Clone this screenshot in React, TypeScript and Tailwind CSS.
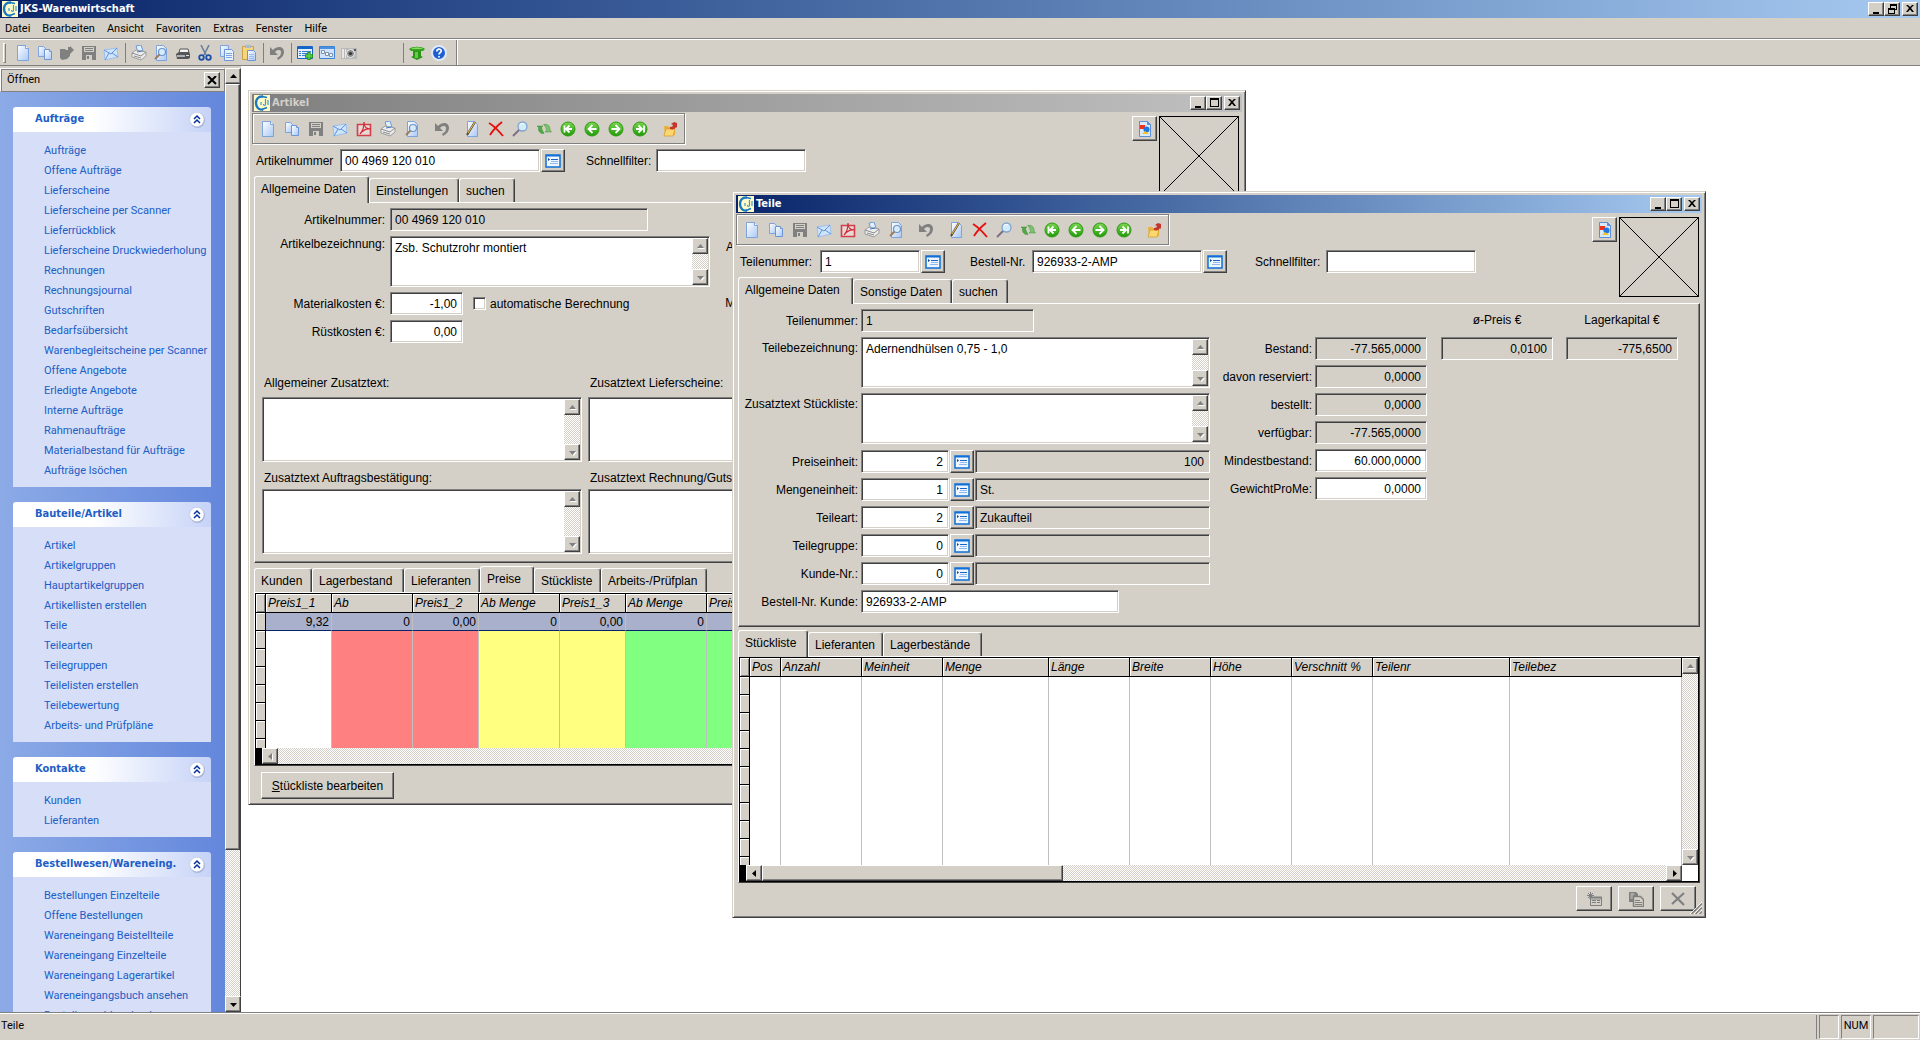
import { useId } from 'react'
import type { ReactNode } from 'react'
import clsx from 'clsx'

const RAISED =
  'border border-t-white border-l-white border-r-[#404040] border-b-[#404040] bg-[#d4d0c8] shadow-[inset_-1px_-1px_0_#808080]'
const SUNKEN =
  'border border-t-[#808080] border-l-[#808080] border-r-white border-b-white shadow-[inset_1px_1px_0_#404040,inset_-1px_-1px_0_#d4d0c8]'
const DITHER =
  'bg-[conic-gradient(#fff_25%,#d4d0c8_0_50%,#fff_0_75%,#d4d0c8_0)] bg-[length:2px_2px]'
const UI_FONT = "font-['Roboto','DejaVu_Sans',sans-serif]"
const UI_BOLD = "font-['DejaVu_Sans_Condensed','DejaVu_Sans',sans-serif] text-[11px] font-bold"

/* ---------- icons ---------- */

const PAGE = 'M3.5 .5h7l3 3v12h-10z'

const icons: Record<string, ReactNode> = {
  new: (
    <>
      <path d="M2.5 .5h8l3 3v12h-11z" fill="url(#paper)" stroke="#7fa3dc" />
      <path d="M10.5 .5v3h3" fill="#fff" stroke="#7fa3dc" />
    </>
  ),
  copy: (
    <>
      <path d="M1.5 1.5h5l2 2v8h-7z" fill="url(#paper)" stroke="#7fa3dc" />
      <path d="M7.5 4.5h5l2 2v8h-7z" fill="url(#paper)" stroke="#6d94d4" />
      <path d="M12.5 4.5v2h2" fill="#fff" stroke="#6d94d4" />
    </>
  ),
  open: (
    <path
      d="M1 4h5l1 1h2V2h2V1l4 4-4 4v2l-3 3-5 1-2-2z"
      fill="#808080"
    />
  ),
  save: (
    <>
      <path d="M1 1h14v14H1z" fill="#808080" />
      <path d="M3 2h10v5H3zM5 10h6v5H5z" fill="#d4d0c8" />
      <path d="M4 3h8v1H4zM4 5h8v1H4zM6 11h2v3H6z" fill="#808080" />
    </>
  ),
  mail: (
    <>
      <path d="M1 5l13-2 1 9-13 3z" fill="#cfe3fa" stroke="#9dc0ee" />
      <path d="M1 5l7 4 6-6M2 15l4-7M15 12l-6-4" fill="none" stroke="#5f95dc" />
    </>
  ),
  pdf: (
    <>
      <path d="M1.5 3.5h13v11h-13z" fill="#e8d8d8" stroke="#d0414a" strokeWidth="1.6" />
      <path d="M4 13c3-3 4-7 4-12 0 5 2 7 7 7-5-1-8 1-11 5z" fill="none" stroke="#d02b33" strokeWidth="1.2" />
    </>
  ),
  print: (
    <>
      <path d="M5 1l5-1 2 6-5 1z" fill="#e4effc" stroke="#6f9bd8" />
      <path d="M1 8l4-3 10 2v4l-5 4-9-3z" fill="#ececec" stroke="#9c9c9c" />
      <path d="M1 8l9 3 5-4M3 11l7 2" fill="none" stroke="#8c8c8c" />
      <path d="M6 7l5-1" stroke="#3f78c8" />
    </>
  ),
  preview: (
    <>
      <path d={PAGE} fill="url(#paper)" stroke="#7fa3dc" />
      <circle cx="9" cy="7" r="3.5" fill="#d6ecfb" stroke="#6d94c8" strokeWidth="1.2" />
      <path d="M6.5 9.5L2 14" stroke="#9a7d5c" strokeWidth="2" />
    </>
  ),
  fax: (
    <>
      <path d="M5 4h8l1 4H4z" fill="#f4f4f4" stroke="#555" />
      <path d="M1 9l3-2h10l1 2v4l-2 1H2z" fill="#555" />
      <path d="M2 10h8v2H2z" fill="#a9b0b8" />
      <path d="M11 10h3v1h-3z" fill="#ddd" />
    </>
  ),
  cut: (
    <>
      <path d="M4 0l5 10M12 0L7 10" stroke="#6b7f9c" strokeWidth="1.6" />
      <circle cx="4.5" cy="12.5" r="2.3" fill="none" stroke="#1d4fa8" strokeWidth="1.8" />
      <circle cx="11.5" cy="12.5" r="2.3" fill="none" stroke="#1d4fa8" strokeWidth="1.8" />
    </>
  ),
  copytext: (
    <>
      <path d="M1.5 .5h8v11h-8z" fill="url(#paper)" stroke="#7fa3dc" />
      <path d="M5.5 4.5h7l2 2v9h-9z" fill="#e8f2ff" stroke="#6d94d4" />
      <path d="M7 8.5h6M7 10.5h6M7 12.5h6" stroke="#7fa3dc" />
    </>
  ),
  paste: (
    <>
      <path d="M1.5 1.5h11v13h-11z" fill="#f5d67a" stroke="#caa045" />
      <path d="M4 0h6v3H4z" fill="#aeb9c8" />
      <path d="M6.5 5.5h6l2 2v8h-8z" fill="url(#paper)" stroke="#6d94d4" />
      <path d="M8 9.5h5M8 11.5h5M8 13.5h5" stroke="#9dbce6" />
    </>
  ),
  undo: (
    <path
      d="M1 2v8h8l-3-3c3-3 6-2 6 0 0 3-1 4-4 6l1 2c4-2 6-5 6-8 0-5-6-7-11-2z"
      fill="#808080"
    />
  ),
  listadd: (
    <>
      <path d="M.5 1.5h15v12H.5z" fill="#e3f0fd" stroke="#1763c6" />
      <path d="M1 2h14v2H1z" fill="#1763c6" />
      <path d="M2 6.5h2M2 8.5h2M2 10.5h2M5 6.5h9M5 8.5h6M5 10.5h4" stroke="#3a7bd0" />
      <path d="M12 7v8M8 11h8" stroke="#1e9a1e" strokeWidth="3.4" />
      <path d="M12 8v6M9 11h6" stroke="#63d34f" strokeWidth="1.4" />
    </>
  ),
  relation: (
    <>
      <path d="M.5 1.5h15v12H.5z" fill="#cfe4fb" stroke="#3c82d6" />
      <path d="M1 2h14v2H1z" fill="#4b90e0" />
      <path d="M2.5 5.5h3v3h-3zM6.5 7.5h3v3h-3zM10.5 8.5h3v3h-3z" fill="#f5faff" stroke="#7d93ad" />
    </>
  ),
  camera: (
    <>
      <path d="M0 3h16v11H0z" fill="#b9b9b9" />
      <path d="M1 4h2v9H1zM4 4h1v9H4z" fill="#e8e8e8" />
      <circle cx="9.5" cy="8.5" r="4" fill="#8a8a8a" stroke="#f3f3f3" />
      <circle cx="9.5" cy="8.5" r="1.6" fill="#333" />
      <path d="M13 4h2v2h-2z" fill="#555" />
    </>
  ),
  exit: (
    <>
      <path d="M0 4c3-3 13-3 16 0l-2 2H2z" fill="#35a31c" />
      <path d="M4 6h8v5l2 1-6 3-6-3 2-1z" fill="#2b9514" />
      <path d="M2 4c3-2 9-2 12 0z" fill="#8bdc6c" />
      <path d="M6 7h3v6H6z" fill="#6cc752" />
    </>
  ),
  help: (
    <>
      <circle cx="8" cy="8" r="7" fill="#1e5fd0" stroke="#dfe9fa" strokeWidth="2" />
      <path d="M5.8 6.500c0-3 4.500-3 4.500-.5 0 1.500-2.300 1.500-2.300 3.500M8 11v1.500" fill="none" stroke="#fff" strokeWidth="1.700" />
    </>
  ),
  edit: (
    <>
      <path d={PAGE} fill="url(#paper)" stroke="#7fa3dc" />
      <path d="M11 1L3 14" stroke="#5b4a2f" strokeWidth="2.2" />
      <path d="M11 1L4 12" stroke="#f0c04c" />
    </>
  ),
  remove: (
    <path d="M1 2c5 3 9 7 14 13M14 1C9 5 5 9 2 14" fill="none" stroke="#e41111" strokeWidth="1.9" />
  ),
  search: (
    <>
      <circle cx="10.5" cy="5.5" r="4.5" fill="#d3ecfd" stroke="#7ea4cf" strokeWidth="1.3" />
      <path d="M8 4c1-2 3-2 4-1" fill="none" stroke="#fff" />
      <path d="M7 9l-6 6" stroke="#7c6f86" strokeWidth="2" />
    </>
  ),
  refresh: (
    <>
      <path d="M1 5h6L5.500 6.500C6 9 7 10 8 12.500 4 13 2 10 2.500 6.500z" fill="#4fa845" stroke="#3f8f38" strokeWidth=".5" />
      <path d="M15.500 11H9l1.500-1.500C10 7 10 5.500 7.500 3.500c4.500-1 7 2 6.500 5.500z" fill="#7cc26f" stroke="#3f8f38" strokeWidth=".5" />
    </>
  ),
  first: <NavArrow d="M12 8H7M9.500 4.500L6 8l3.500 3.500M4.500 4.500v7" />,
  prev: <NavArrow d="M12.500 8H5M8.500 4L4.500 8l4 4" />,
  next: <NavArrow d="M3.500 8H11M7.500 4l4 4-4 4" />,
  last: <NavArrow d="M4 8h5M6.500 4.500L10 8l-3.500 3.500M12 4.500v7" />,
  folder: (
    <>
      <path d="M2 5h4l1 1h6v8l-10 1z" fill="#e8b13a" />
      <path d="M2 15l2-7h9l-2 7z" fill="#fbd86f" stroke="#d29a2c" strokeWidth=".7" />
      <path d="M8 6c2 0 3-1 3-2L9 3l3-2 3 1v5l-1-1c-1 2-3 3-6 2z" fill="#c6352b" />
    </>
  ),
  picker: (
    <>
      <path d="M1 2h14v12H1z" fill="#eef6ff" stroke="#0f6fd6" strokeWidth="1.5" />
      <path d="M1 2h14v1.500H1z" fill="#0f6fd6" />
      <path d="M3 5l2 1.500L3 8z" fill="#0b3f91" />
      <path d="M6 6.500h7" stroke="#1b62c4" />
      <path d="M6 8.500h7M5 10.500h8" stroke="#8fbaf0" />
    </>
  ),
  picture: (
    <>
      <path d="M2.500 .5h8l3 3v12h-11z" fill="#d9e9fb" stroke="#5b8fd6" />
      <path d="M10.500 .5v3h3" fill="#5b8fd6" stroke="#5b8fd6" />
      <path d="M3 4h5v4H3z" fill="#f0301a" />
      <circle cx="9.500" cy="8.500" r="3" fill="#2276e0" />
      <path d="M5 13l3-3 4 3z" fill="#f7c61a" />
    </>
  ),
  addrow: (
    <>
      <path d="M4.5 6.5h11v8h-11z" fill="none" stroke="#808080" />
      <path d="M4 6h12v2H4zM6 9.5h4M11 9.5h3M6 11.5h4M11 11.5h3M4.5 1v7M1 4.5h7M2 2l5 5M7 2L2 7" fill="none" stroke="#808080" />
    </>
  ),
  copyrow: (
    <>
      <path d="M1 1h7l2 2v8H1z" fill="#808080" />
      <path d="M2.5 3h4M2.5 5h3M2.5 7h3" stroke="#d4d0c8" />
      <path d="M5.5 5.5h7l3 3v7h-10z" fill="#d4d0c8" stroke="#808080" strokeWidth="1.5" />
      <path d="M7 9.5h5M7 11.5h7M7 13.5h7" stroke="#808080" />
    </>
  ),
  delrow: <path d="M2 2l12 12M14 2L2 13" stroke="#808080" strokeWidth="2.2" fill="none" />,
}

function NavArrow({ d }: { d: string }) {
  return (
    <>
      <circle cx="8" cy="8" r="7" fill="url(#green)" stroke="#2e9a12" />
      <path d={d} fill="none" stroke="#fff" strokeWidth="1.8" />
    </>
  )
}

function Icon({ name, size = 16 }: { name: string; size?: number }) {
  return (
    <svg width={size} height={size} viewBox="0 0 16 16" aria-hidden="true" className="shrink-0">
      {icons[name]}
    </svg>
  )
}

const AppLogo = () => (
  <svg width="16" height="16" viewBox="0 0 16 16" aria-hidden="true" className="shrink-0">
    <path d="M0 0h16v16H0z" fill="#fffbc8" />
    <path d="M9 1.500C4 1 2 4.500 2 8s2.500 7.500 7 6.500" fill="none" stroke="#1878c0" strokeWidth="2.4" />
    <path d="M8 1.500l5 1M8 14.500l5-2" stroke="#1878c0" strokeWidth="1.500" />
    <path d="M7 7v3M9.500 9c0 2 2 2 2 0V4M14 5v5" fill="none" stroke="#3f98d4" strokeWidth="1.200" />
  </svg>
)

/* ---------- small controls ---------- */

const ARROWS = {
  up: 'M4 9h7L7.5 5z',
  down: 'M4 6h7l-3.5 4z',
  left: 'M9 4v7L5 7.5z',
  right: 'M6 4v7l4-3.5z',
}

type ArrowProps = { dir: keyof typeof ARROWS; disabled?: boolean }

const ArrowButton = ({ dir, disabled }: ArrowProps) => (
  <button
    type="button"
    aria-label={dir}
    disabled={disabled}
    className={clsx('flex size-4 shrink-0 items-center justify-center', RAISED)}
  >
    <svg width="15" height="15" viewBox="0 0 15 15" className="shrink-0">
      {disabled && <path d={ARROWS[dir]} fill="#fff" transform="translate(1 1)" />}
      <path d={ARROWS[dir]} fill={disabled ? '#808080' : '#000'} />
    </svg>
  </button>
)

const CAPTION_GLYPHS: Record<string, string> = {
  Minimieren: 'M3 9h6v2H3z',
  Maximieren: 'M2 1h9v9H2zM3 3v6h7V3z',
  Wiederherstellen: 'M4 1h7v6H9v4H2V5h2zM5 3v2h4v1h1V3zM3 7v3h5V7z',
  Schließen: 'M2 2h2l2 2 2-2h2L7 5l3 4H8L6 6.5 4 9H2l3-4z',
}

const CaptionButtons = ({ restore }: { restore?: boolean }) => (
  <div className="ml-auto flex pr-0.5">
    {['Minimieren', restore ? 'Wiederherstellen' : 'Maximieren', 'Schließen'].map((name) => (
      <button
        key={name}
        type="button"
        aria-label={name}
        className={clsx('flex h-3.5 w-4 items-center justify-center last:ml-0.5', RAISED)}
      >
        <svg width="13" height="12" viewBox="0 0 13 12" className="shrink-0">
          <path d={CAPTION_GLYPHS[name]} fillRule="evenodd" />
        </svg>
      </button>
    ))}
  </div>
)

const ToolbarGroup = ({ items, wide }: { items: string[]; wide?: boolean }) => (
  <div className="flex">
    {items.map((name) => (
      <button
        key={name}
        type="button"
        aria-label={name}
        className={clsx('flex h-6 items-center justify-center', wide ? 'w-6' : 'w-[22px]')}
      >
        <Icon name={name} />
      </button>
    ))}
  </div>
)

const Separator = () => <div className="mr-0.5 ml-[3px] h-5 w-px bg-[#808080]" />

const PickerButton = () => (
  <button
    type="button"
    aria-label="Auswählen"
    className={clsx('flex h-[23px] w-6 shrink-0 items-center justify-center', RAISED)}
  >
    <Icon name="picker" />
  </button>
)

type FieldProps = {
  label?: string
  name?: string
  value?: string
  labelWidth?: string
  width: string
  right?: boolean
  readOnly?: boolean
  picker?: boolean
  children?: ReactNode
}

const Field = ({
  label,
  name,
  value = '',
  labelWidth,
  width,
  right,
  readOnly,
  picker,
  children,
}: FieldProps) => {
  const id = useId()
  return (
    <div className="flex h-[23px] items-center">
      {label && (
        <label htmlFor={id} className={clsx('mr-[3px] shrink-0 whitespace-nowrap', labelWidth)}>
          {label}
        </label>
      )}
      <input
        id={id}
        type="text"
        aria-label={label ? undefined : name}
        defaultValue={value}
        readOnly={readOnly}
        className={clsx(
          'h-[23px] pr-[5px] pl-1 outline-none',
          SUNKEN,
          width,
          right && 'text-right',
          readOnly ? 'bg-[#d4d0c8]' : 'bg-white',
        )}
      />
      {picker && (
        <div className="ml-px">
          <PickerButton />
        </div>
      )}
      {children}
    </div>
  )
}

const VScroll = () => (
  <div className={clsx('flex w-4 shrink-0 flex-col justify-between', DITHER)}>
    <ArrowButton dir="up" disabled />
    <ArrowButton dir="down" disabled />
  </div>
)

type MemoProps = { id: string; height: string; width: string; value?: string }

const Memo = ({ id, height, width, value = '' }: MemoProps) => (
  <div className={clsx('flex bg-white p-px', SUNKEN, height, width)}>
    <textarea
      id={id}
      defaultValue={value}
      className="min-w-0 flex-1 resize-none overflow-hidden bg-white px-[3px] py-0.5 leading-4 outline-none"
    />
    <VScroll />
  </div>
)

type MemoRowProps = { label: string; labelClass: string; width: string; value?: string }

const MemoRow = ({ label, labelClass, width, value }: MemoRowProps) => {
  const id = useId()
  return (
    <div className="flex items-start">
      <label
        htmlFor={id}
        className={clsx('mr-[3px] shrink-0 text-right whitespace-nowrap', labelClass)}
      >
        {label}
      </label>
      <Memo id={id} height="h-[51px]" width={width} value={value} />
    </div>
  )
}

type TabDef = { label: string; width: string; active?: boolean }

const TabStrip = ({ tabs }: { tabs: TabDef[] }) => (
  <div role="tablist" className="relative z-10 -mb-px flex h-[27px] shrink-0 items-end">
    {tabs.map(({ label, width, active }) => (
      <button
        key={label}
        type="button"
        role="tab"
        aria-selected={!!active}
        className={clsx(
          'rounded-t-[3px] border-t border-r border-l border-t-white border-r-[#404040] border-l-white bg-[#d4d0c8] pl-1.5 text-left whitespace-nowrap shadow-[inset_-1px_0_0_#808080]',
          width,
          active ? 'h-[27px] pb-0.5' : 'mb-px h-6 pt-px',
        )}
      >
        {label}
      </button>
    ))}
  </div>
)

const PANEL =
  'border border-t-white border-l-white border-r-[#404040] border-b-[#404040] shadow-[inset_-1px_-1px_0_#808080]'

/* ---------- data grid ---------- */

type Column = { label: string; width: string; fill?: string; value?: string }

const Grid = ({ columns, rows }: { columns: Column[]; rows: number }) => (
  <table className="w-full table-fixed border-separate border-spacing-0">
    <colgroup>
      <col className="w-2.5" />
      {columns.map((c, i) => (
        <col key={i} className={c.width} />
      ))}
    </colgroup>
    <thead>
      <tr className="h-[19px]">
        <td className="border-r border-b border-black bg-[#d4d0c8] p-0 shadow-[inset_1px_1px_0_#fff,inset_-1px_-1px_0_#808080]" />
        {columns.map((c, i) => (
          <th
            key={i}
            scope="col"
            className="overflow-hidden border-r border-b border-black bg-[#d4d0c8] p-0 pl-0.5 text-left leading-4 font-normal whitespace-nowrap italic shadow-[inset_1px_1px_0_#fff]"
          >
            {c.label}
          </th>
        ))}
      </tr>
    </thead>
    <tbody>
      {Array.from({ length: rows }, (_, r) => (
        <tr key={r} className="h-[18px]">
          <td className="border-r border-b border-black bg-[#d4d0c8] p-0 shadow-[inset_1px_1px_0_#fff]" />
          {columns.map((c, i) => {
            const filled = r === 0 && c.value !== undefined
            return (
              <td
                key={i}
                className={clsx(
                  'border-r border-r-[#c0c0c0] p-0 pr-0.5 text-right leading-4',
                  filled ? 'border-b border-b-[#0a246a] bg-[#a8b0cb]' : (c.fill ?? 'bg-white'),
                )}
              >
                {filled && c.value}
              </td>
            )
          })}
        </tr>
      ))}
    </tbody>
  </table>
)

/* ---------- windows ---------- */

type MdiWindowProps = {
  title: string
  active?: boolean
  frame: string
  filters: ReactNode
  tabs: TabDef[]
  children: ReactNode
}

const MdiWindow = ({ title, active, frame, filters, tabs, children }: MdiWindowProps) => (
  <section
    aria-label={title}
    className={clsx(
      'absolute flex flex-col border border-t-[#d4d0c8] border-r-[#404040] border-b-[#404040] border-l-[#d4d0c8] bg-[#d4d0c8] p-[3px] shadow-[inset_1px_1px_0_#fff,inset_-1px_-1px_0_#808080]',
      frame,
    )}
  >
    <div
      className={clsx(
        'flex h-[18px] shrink-0 items-center gap-0.5 bg-linear-to-r pl-0.5',
        UI_BOLD,
        active
          ? 'from-[#0a246a] to-[#a6caf0] text-white'
          : 'from-[#808080] to-[#c0c0c0] text-[#d4d0c8]',
      )}
    >
      <AppLogo />
      {title}
      <CaptionButtons />
    </div>

    <div className="flex items-start">
      <div className="flex-1">
        <div className="mt-px flex h-[31px] w-fit items-center gap-1.5 border border-[#808080] pr-0.5 pl-[3px] shadow-[inset_1px_1px_0_#fff,1px_1px_0_#fff]">
          <ToolbarGroup wide items={['new', 'copy', 'save', 'mail', 'pdf', 'print', 'preview']} />
          <ToolbarGroup wide items={['undo']} />
          <ToolbarGroup
            wide
            items={['edit', 'remove', 'search', 'refresh', 'first', 'prev', 'next', 'last']}
          />
          <ToolbarGroup wide items={['folder']} />
        </div>
        <div className="mt-[5px] mb-1 flex items-center pl-1">{filters}</div>
        <div className="pl-0.5">
          <TabStrip tabs={tabs} />
        </div>
      </div>
      <div className="flex items-start gap-0.5 pt-1 pr-[3px]">
        <button
          type="button"
          aria-label="Bild"
          className={clsx('flex size-[25px] items-center justify-center', RAISED)}
        >
          <Icon name="picture" />
        </button>
        <svg width="80" height="80" viewBox="0 0 80 80" aria-hidden="true">
          <path d="M.5 .5h79v79H.5zM0 0l80 80M80 0L0 80" fill="none" stroke="#000" />
        </svg>
      </div>
    </div>

    {children}
  </section>
)

const LabelledMemo = ({ label, labelHeight }: { label: string; labelHeight: string }) => {
  const id = useId()
  return (
    <div>
      <label htmlFor={id} className={clsx('block pl-0.5', labelHeight)}>
        {label}
      </label>
      <Memo id={id} height="h-[65px]" width="w-[320px]" />
    </div>
  )
}

const priceColumns: Column[] = [
  { label: 'Preis1_1', width: 'w-[66px]', value: '9,32' },
  { label: 'Ab', width: 'w-[81px]', fill: 'bg-[#ff8080]', value: '0' },
  { label: 'Preis1_2', width: 'w-[66px]', fill: 'bg-[#ff8080]', value: '0,00' },
  { label: 'Ab Menge', width: 'w-[81px]', fill: 'bg-[#ffff80]', value: '0' },
  { label: 'Preis1_3', width: 'w-[66px]', fill: 'bg-[#ffff80]', value: '0,00' },
  { label: 'Ab Menge', width: 'w-[81px]', fill: 'bg-[#80ff80]', value: '0' },
  { label: 'Preis1_4', width: 'w-[66px]', fill: 'bg-[#80ff80]', value: '0,00' },
  { label: '', width: 'w-auto', value: '' },
]

const ARTIKEL_LABEL = 'w-[132px] pr-0.5 text-right'

const ArtikelWindow = () => (
  <MdiWindow
    title="Artikel"
    frame="left-[7px] top-6 h-[715px] w-[998px]"
    tabs={[
      { label: 'Allgemeine Daten', width: 'w-[115px]', active: true },
      { label: 'Einstellungen', width: 'w-[90px]' },
      { label: 'suchen', width: 'w-14' },
    ]}
    filters={
      <>
        <Field label="Artikelnummer" labelWidth="w-[81px]" value="00 4969 120 010" width="w-[200px]" picker />
        <div className="ml-[21px]">
          <Field label="Schnellfilter:" labelWidth="w-[67px]" width="w-[150px]" />
        </div>
      </>
    }
  >
    <div className={clsx('mx-0.5 h-[361px] shrink-0 overflow-hidden pt-[5px]', PANEL)}>
      <div className="flex h-[162px] items-start">
        <div className="flex flex-col gap-[5px]">
          <Field label="Artikelnummer:" labelWidth={ARTIKEL_LABEL} value="00 4969 120 010" width="w-[258px]" readOnly />
          <MemoRow label="Artikelbezeichnung:" labelClass="w-[132px] pr-0.5 leading-4" width="w-[320px]" value="Zsb. Schutzrohr montiert" />
          <Field label="Materialkosten €:" labelWidth={ARTIKEL_LABEL} value="-1,00" width="w-[73px]" right>
            <label className="ml-2.5 flex items-center gap-1">
              <input type="checkbox" className={clsx('size-[13px] appearance-none bg-white', SUNKEN)} />
              automatische Berechnung
            </label>
          </Field>
          <Field label="Rüstkosten €:" labelWidth={ARTIKEL_LABEL} value="0,00" width="w-[73px]" right />
        </div>
        <div className="flex w-[90px] flex-col gap-[5px] text-right leading-[23px] whitespace-nowrap">
          <p>Artikelname:</p>
          <p className="h-[51px]">Artikelgruppe:</p>
          <p>Materialanteil:</p>
        </div>
      </div>
      <div className="grid grid-cols-[320px_320px] gap-x-1.5 gap-y-2 pt-[5px] pl-[7px]">
        <LabelledMemo label="Allgemeiner Zusatztext:" labelHeight="h-[22px]" />
        <LabelledMemo label="Zusatztext Lieferscheine:" labelHeight="h-[22px]" />
        <LabelledMemo label="Zusatztext Auftragsbestätigung:" labelHeight="h-[19px]" />
        <LabelledMemo label="Zusatztext Rechnung/Gutschrift:" labelHeight="h-[19px]" />
      </div>
    </div>

    <div className="mt-[3px] flex min-h-0 flex-1 flex-col px-0.5">
      <TabStrip
        tabs={[
          { label: 'Kunden', width: 'w-[58px]' },
          { label: 'Lagerbestand', width: 'w-[92px]' },
          { label: 'Lieferanten', width: 'w-[76px]' },
          { label: 'Preise', width: 'w-[54px]', active: true },
          { label: 'Stückliste', width: 'w-[67px]' },
          { label: 'Arbeits-/Prüfplan', width: 'w-[106px]' },
        ]}
      />
      <div className={clsx('flex min-h-0 flex-1 flex-col', PANEL)}>
        <div className="flex min-h-0 flex-1 flex-col border border-black bg-white">
          <div className="min-h-0 flex-1 overflow-hidden">
            <Grid columns={priceColumns} rows={8} />
          </div>
          <div className={clsx('flex h-4 shrink-0 border-l-[6px] border-black', DITHER)}>
            <ArrowButton dir="left" disabled />
          </div>
        </div>
      </div>
      <div className="pt-1.5 pb-0.5 pl-[7px]">
        <button type="button" className={clsx('h-[27px] w-[133px]', RAISED)}>
          <u>S</u>tückliste bearbeiten
        </button>
      </div>
    </div>
  </MdiWindow>
)

const lookups = [
  { label: 'Preiseinheit:', code: '2', text: '100', right: true },
  { label: 'Mengeneinheit:', code: '1', text: 'St.' },
  { label: 'Teileart:', code: '2', text: 'Zukaufteil' },
  { label: 'Teilegruppe:', code: '0', text: '' },
  { label: 'Kunde-Nr.:', code: '0', text: '' },
]

const stock = [
  { label: 'Bestand:', value: '-77.565,0000', readOnly: true },
  { label: 'davon reserviert:', value: '0,0000', readOnly: true },
  { label: 'bestellt:', value: '0,0000', readOnly: true },
  { label: 'verfügbar:', value: '-77.565,0000', readOnly: true },
  { label: 'Mindestbestand:', value: '60.000,0000' },
  { label: 'GewichtProMe:', value: '0,0000' },
]

const partColumns: Column[] = [
  { label: 'Pos', width: 'w-[31px]' },
  { label: 'Anzahl', width: 'w-[81px]' },
  { label: 'Meinheit', width: 'w-[81px]' },
  { label: 'Menge', width: 'w-[106px]' },
  { label: 'Länge', width: 'w-[81px]' },
  { label: 'Breite', width: 'w-[81px]' },
  { label: 'Höhe', width: 'w-[81px]' },
  { label: 'Verschnitt %', width: 'w-[81px]' },
  { label: 'Teilenr', width: 'w-[137px]' },
  { label: 'Teilebez', width: 'w-auto' },
]

const Total = ({ label, value }: { label: string; value: string }) => {
  const id = useId()
  return (
    <div className="flex w-28 flex-col gap-[5px]">
      <label htmlFor={id} className="text-center leading-[23px]">
        {label}
      </label>
      <input
        id={id}
        type="text"
        readOnly
        defaultValue={value}
        className={clsx('h-[23px] w-full bg-[#d4d0c8] px-[5px] text-right outline-none', SUNKEN)}
      />
    </div>
  )
}

const TEILE_LABEL = 'w-[119px] text-right'

const TeileWindow = () => (
  <MdiWindow
    title="Teile"
    active
    frame="left-[491px] top-[125px] h-[727px] w-[974px]"
    tabs={[
      { label: 'Allgemeine Daten', width: 'w-[115px]', active: true },
      { label: 'Sonstige Daten', width: 'w-[99px]' },
      { label: 'suchen', width: 'w-14' },
    ]}
    filters={
      <>
        <Field label="Teilenummer:" labelWidth="w-[77px]" value="1" width="w-[100px]" picker />
        <div className="ml-[25px]">
          <Field label="Bestell-Nr." labelWidth="w-[59px]" value="926933-2-AMP" width="w-[170px]" picker />
        </div>
        <div className="ml-7">
          <Field label="Schnellfilter:" labelWidth="w-[68px]" width="w-[150px]" />
        </div>
      </>
    }
  >
    <div className={clsx('mx-0.5 flex h-[324px] shrink-0 items-start pt-[5px]', PANEL)}>
      <div className="flex flex-col gap-1.5">
        <div className="flex flex-col gap-[5px]">
          <Field label="Teilenummer:" labelWidth={TEILE_LABEL} value="1" width="w-[173px]" readOnly />
          <MemoRow label="Teilebezeichnung:" labelClass="w-[119px] leading-[23px]" width="w-[349px]" value="Adernendhülsen 0,75 - 1,0" />
          <MemoRow label="Zusatztext Stückliste:" labelClass="w-[119px] leading-[23px]" width="w-[349px]" />
        </div>
        <div className="flex flex-col gap-[5px]">
          {lookups.map(({ label, code, text, right }) => (
            <Field key={label} label={label} labelWidth={TEILE_LABEL} value={code} width="w-[88px]" right picker>
              <div className="ml-px">
                <Field name={`${label} Text`} value={text} width="w-[235px]" readOnly right={right} />
              </div>
            </Field>
          ))}
          <Field label="Bestell-Nr. Kunde:" labelWidth={TEILE_LABEL} value="926933-2-AMP" width="w-[258px]" />
        </div>
      </div>
      <div className="flex flex-col gap-[5px] pt-7">
        {stock.map(({ label, value, readOnly }) => (
          <Field key={label} label={label} labelWidth="w-[102px] text-right" value={value} width="w-28" right readOnly={readOnly} />
        ))}
      </div>
      <div className="ml-3.5 flex gap-[13px]">
        <Total label="ø-Preis €" value="0,0100" />
        <Total label="Lagerkapital €" value="-775,6500" />
      </div>
    </div>

    <div className="mt-[3px] flex min-h-0 flex-1 flex-col px-0.5">
      <TabStrip
        tabs={[
          { label: 'Stückliste', width: 'w-[70px]', active: true },
          { label: 'Lieferanten', width: 'w-[75px]' },
          { label: 'Lagerbestände', width: 'w-[99px]' },
        ]}
      />
      <div className={clsx('flex min-h-0 flex-1 flex-col', PANEL)}>
        <div className="flex min-h-0 flex-1 border border-black bg-white">
          <div className="flex min-w-0 flex-1 flex-col">
            <div className="min-h-0 flex-1 overflow-hidden">
              <Grid columns={partColumns} rows={11} />
            </div>
            <div className={clsx('flex h-4 shrink-0 border-l-[6px] border-black', DITHER)}>
              <ArrowButton dir="left" />
              <div className={clsx('w-[301px]', RAISED)} />
              <div className="ml-auto flex">
                <ArrowButton dir="right" />
              </div>
            </div>
          </div>
          <div className="flex pb-4">
            <VScroll />
          </div>
        </div>
      </div>
      <div className="flex justify-end gap-1.5 pt-[3px] pr-1 pb-[3px]">
        {['addrow', 'copyrow', 'delrow'].map((name) => (
          <button
            key={name}
            type="button"
            aria-label={name}
            disabled
            className={clsx('flex h-[25px] w-9 items-center justify-center', RAISED)}
          >
            <Icon name={name} />
          </button>
        ))}
      </div>
    </div>
    <svg width="12" height="12" viewBox="0 0 12 12" aria-hidden="true" className="absolute right-[3px] bottom-[3px]">
      <path d="M0 12L12 0M4 12l8-8M8 12l4-4" stroke="#fff" />
      <path d="M1.5 12L12 1.5M5.5 12L12 5.5M9.5 12L12 9.5" stroke="#808080" strokeWidth="1.5" />
    </svg>
  </MdiWindow>
)

/* ---------- sidebar ---------- */

const groups = [
  {
    title: 'Aufträge',
    items: [
      'Aufträge',
      'Offene Aufträge',
      'Lieferscheine',
      'Lieferscheine per Scanner',
      'Lieferrückblick',
      'Lieferscheine Druckwiederholung',
      'Rechnungen',
      'Rechnungsjournal',
      'Gutschriften',
      'Bedarfsübersicht',
      'Warenbegleitscheine per Scanner',
      'Offene Angebote',
      'Erledigte Angebote',
      'Interne Aufträge',
      'Rahmenaufträge',
      'Materialbestand für Aufträge',
      'Aufträge lsöchen',
    ],
  },
  {
    title: 'Bauteile/Artikel',
    items: [
      'Artikel',
      'Artikelgruppen',
      'Hauptartikelgruppen',
      'Artikellisten erstellen',
      'Teile',
      'Teilearten',
      'Teilegruppen',
      'Teilelisten erstellen',
      'Teilebewertung',
      'Arbeits- und Prüfpläne',
    ],
  },
  { title: 'Kontakte', items: ['Kunden', 'Lieferanten'] },
  {
    title: 'Bestellwesen/Wareneing.',
    items: [
      'Bestellungen Einzelteile',
      'Offene Bestellungen',
      'Wareneingang Beistellteile',
      'Wareneingang Einzelteile',
      'Wareneingang Lagerartikel',
      'Wareneingangsbuch ansehen',
      'Bestellvorschlag drucken',
    ],
  },
]

const Sidebar = () => (
  <aside className="flex w-[241px] shrink-0 pt-0.5">
    <div className="flex min-w-0 flex-1 flex-col">
      <header className="flex h-6 shrink-0 items-center border border-white border-r-[#808080] border-b-[#808080] pr-1 pl-1.5 shadow-[inset_1px_1px_0_#808080]">
        Öffnen
        <button
          type="button"
          aria-label="Schließen"
          className={clsx('ml-auto flex size-4 items-center justify-center', RAISED)}
        >
          <svg width="10" height="9" viewBox="0 0 10 9" className="shrink-0">
            <path d="M1 0l8 8M9 0L1 8" stroke="#000" strokeWidth="2" />
          </svg>
        </button>
      </header>
      <nav className="min-h-0 flex-1 overflow-hidden bg-linear-to-r from-[#8caae6] to-[#6487dc] pt-[15px] pr-3.5 pl-[13px]">
        {groups.map(({ title, items }) => (
          <section key={title} className="mb-[15px]">
            <h2
              className={clsx(
                'flex h-[25px] items-center rounded-t-[3px] bg-linear-to-r from-white from-40% to-[#c6d3f7] pr-1.5 pl-[22px] text-[#215dc6]',
                UI_BOLD,
              )}
            >
              {title}
              <svg width="16" height="16" viewBox="0 0 16 16" className="ml-auto shrink-0" aria-hidden="true">
                <circle cx="8.5" cy="8.5" r="7.5" fill="#a9b4d6" />
                <circle cx="7.8" cy="7.5" r="7.2" fill="#fff" stroke="#b5c0de" strokeWidth=".6" />
                <path d="M5 7l3-3 3 3M5 11l3-3 3 3" fill="none" stroke="#00309c" strokeWidth="1.5" />
              </svg>
            </h2>
            <ul className="bg-[#d6dff7] pt-[9px] pb-1.5 pl-[31px]">
              {items.map((item) => (
                <li key={item} className="h-5 leading-5 whitespace-nowrap">
                  <a href="#" className="text-[#215dc6]">
                    {item}
                  </a>
                </li>
              ))}
            </ul>
          </section>
        ))}
      </nav>
    </div>
    <div className={clsx('flex w-4 flex-col border-r border-[#404040]', DITHER)}>
      <ArrowButton dir="up" />
      <div className={clsx('h-[766px]', RAISED)} />
      <div className="mt-auto">
        <ArrowButton dir="down" />
      </div>
    </div>
  </aside>
)

export default function App() {
  return (
    <div className={clsx('flex h-screen min-h-0 flex-col overflow-hidden bg-[#d4d0c8] text-[11px] text-black', UI_FONT)}>
      <svg width="0" height="0" className="absolute" aria-hidden="true">
        <defs>
          <linearGradient id="paper" x1="0" y1="0" x2="1" y2="1">
            <stop offset="0" stopColor="#fff" />
            <stop offset="1" stopColor="#a9c8f5" />
          </linearGradient>
          <linearGradient id="green" x1="0" y1="0" x2="0" y2="1">
            <stop offset="0" stopColor="#7ad64f" />
            <stop offset="1" stopColor="#1f9a08" />
          </linearGradient>
        </defs>
      </svg>

      <header
        className={clsx(
          'flex h-[18px] shrink-0 items-center gap-0.5 bg-linear-to-r from-[#0a246a] to-[#a6caf0] pl-0.5 text-white',
          UI_BOLD,
        )}
      >
        <AppLogo />
        JKS-Warenwirtschaft
        <CaptionButtons restore />
      </header>

      <nav className="flex h-[21px] shrink-0 items-center gap-3 border-b border-[#808080] pt-0.5 pl-[5px]">
        {['Datei', 'Bearbeiten', 'Ansicht', 'Favoriten', 'Extras', 'Fenster', 'Hilfe'].map((item) => (
          <button key={item} type="button">
            {item}
          </button>
        ))}
      </nav>

      <div className="flex h-[27px] shrink-0 border-t border-b border-t-white border-b-[#808080]">
        <div className="flex items-center border-r border-[#808080] pr-1.5 pl-[3px]">
          <div className="mr-1.5 h-5 w-[3px] border border-t-white border-r-[#808080] border-b-[#808080] border-l-white" />
          <ToolbarGroup items={['new', 'copy', 'open', 'save', 'mail']} />
          <Separator />
          <ToolbarGroup items={['print', 'preview', 'fax', 'cut', 'copytext', 'paste']} />
          <Separator />
          <ToolbarGroup items={['undo']} />
          <Separator />
          <ToolbarGroup items={['listadd', 'relation', 'camera']} />
          <div className="w-10" />
          <Separator />
          <ToolbarGroup items={['exit', 'help']} />
        </div>
        <div className="flex-1 border-l border-white" />
      </div>

      <div className="flex min-h-0 flex-1">
        <Sidebar />
        <main className="relative min-w-0 flex-1 overflow-hidden bg-white font-['Liberation_Sans',Arial,sans-serif] text-xs">
          <ArtikelWindow />
          <TeileWindow />
        </main>
      </div>

      <footer className="flex h-7 shrink-0 items-center border-t border-[#808080] shadow-[inset_0_1px_0_#fff]">
        <span className="flex-1 pl-px">Teile</span>
        <div className="flex h-6 items-stretch gap-0.5 border-l border-[#808080] pr-px pl-0.5 [&>*]:border [&>*]:border-t-[#808080] [&>*]:border-r-white [&>*]:border-b-white [&>*]:border-l-[#808080]">
          <span className="w-5" />
          <span className="flex w-[30px] items-center justify-center">NUM</span>
          <span className="w-[46px]" />
        </div>
      </footer>
    </div>
  )
}
